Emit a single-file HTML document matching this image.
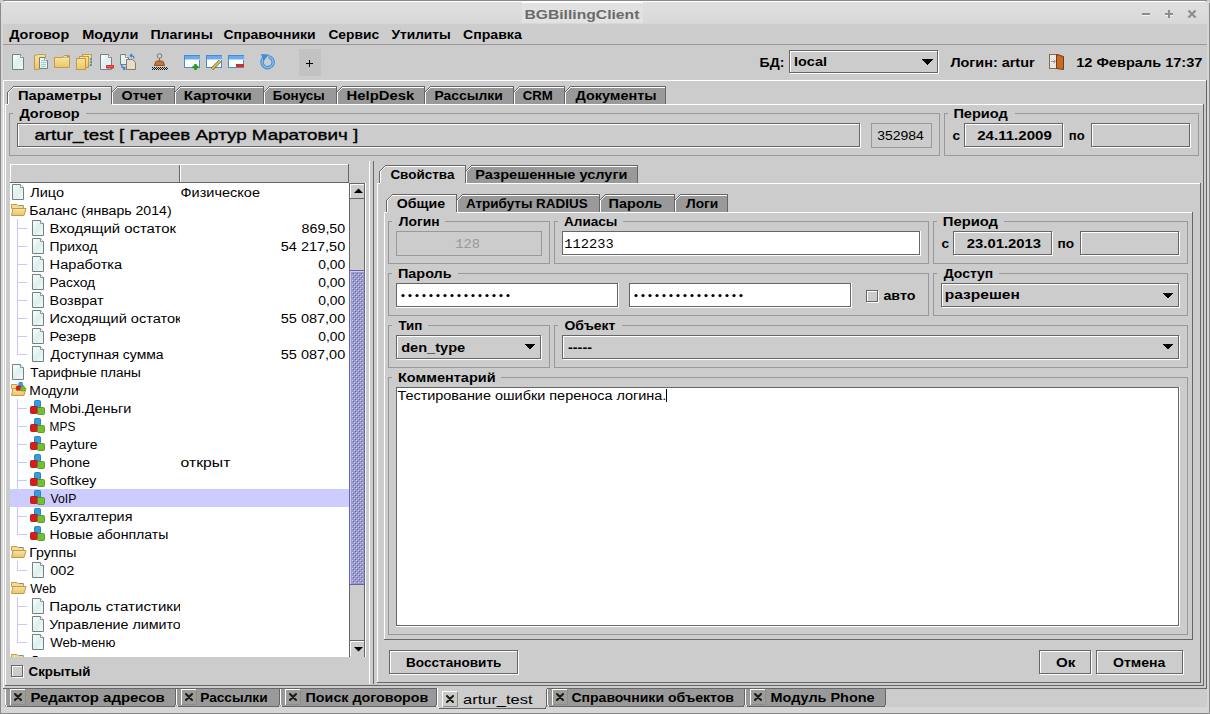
<!DOCTYPE html><html><head><meta charset="utf-8"><style>html,body{margin:0;padding:0;background:#cccccc;overflow:hidden}svg{display:block}</style></head><body>
<svg width="1210" height="714" viewBox="0 0 1210 714" shape-rendering="crispEdges">
<defs><linearGradient id="tg" x1="0" y1="0" x2="0" y2="1"><stop offset="0" stop-color="#e0e0e0"/><stop offset="1" stop-color="#d8d8d8"/></linearGradient><pattern id="bump" x="0" y="0" width="4" height="4" patternUnits="userSpaceOnUse"><rect x="0" y="0" width="1" height="1" fill="#ccccff"/><rect x="1" y="1" width="1" height="1" fill="#666699"/><rect x="2" y="2" width="1" height="1" fill="#ccccff"/><rect x="3" y="3" width="1" height="1" fill="#666699"/></pattern></defs>
<rect x="0" y="0" width="1210" height="714" fill="#cccccc" />
<path d="M0 714 V6 Q0 0 6 0 H1204 Q1210 0 1210 6 V714 Z" fill="#8a8a8a"/>
<rect x="1" y="1" width="1208" height="712" fill="#d6d6d6" />
<path d="M1 24 V6 Q1 1 6 1 H1203 Q1208 1 1208 6 V24 Z" fill="url(#tg)"/>
<rect x="5" y="1" width="1200" height="1" fill="#ffffff" />
<rect x="522" y="2" width="121" height="21" fill="#e2e2e2" />
<rect x="522" y="2" width="121" height="1" fill="#ffffff" />
<text x="524.4" y="19" font-family="Liberation Sans" font-size="13.5" font-weight="bold" fill="#6b6b6b" textLength="115.0" lengthAdjust="spacingAndGlyphs" >BGBillingClient</text>
<rect x="1142" y="13" width="8" height="2" fill="#8c8c8c" />
<rect x="1142" y="15" width="8" height="1" fill="#f4f4f4" />
<rect x="1165" y="13" width="8" height="2" fill="#8c8c8c" />
<rect x="1168" y="10" width="2" height="8" fill="#8c8c8c" />
<rect x="1170" y="15" width="3" height="1" fill="#f4f4f4" />
<rect x="1165" y="15" width="3" height="1" fill="#f4f4f4" />
<path d="M1188.5 10.5 L1195.5 17.5 M1195.5 10.5 L1188.5 17.5" stroke="#8c8c8c" stroke-width="2.2" shape-rendering="geometricPrecision"/>
<rect x="3" y="24" width="1204" height="683" fill="#cccccc" />
<rect x="3" y="24" width="1204" height="20" fill="#cdcdcd" />
<rect x="3" y="44" width="1204" height="1" fill="#999999" />
<text x="9.2" y="39" font-family="Liberation Sans" font-size="12" font-weight="bold" fill="#000" textLength="60.0" lengthAdjust="spacingAndGlyphs" >Договор</text>
<text x="82.2" y="39" font-family="Liberation Sans" font-size="12" font-weight="bold" fill="#000" textLength="56.2" lengthAdjust="spacingAndGlyphs" >Модули</text>
<text x="150.4" y="39" font-family="Liberation Sans" font-size="12" font-weight="bold" fill="#000" textLength="62.4" lengthAdjust="spacingAndGlyphs" >Плагины</text>
<text x="223.4" y="39" font-family="Liberation Sans" font-size="12" font-weight="bold" fill="#000" textLength="92.2" lengthAdjust="spacingAndGlyphs" >Справочники</text>
<text x="328.4" y="39" font-family="Liberation Sans" font-size="12" font-weight="bold" fill="#000" textLength="50.8" lengthAdjust="spacingAndGlyphs" >Сервис</text>
<text x="391.4" y="39" font-family="Liberation Sans" font-size="12" font-weight="bold" fill="#000" textLength="59.4" lengthAdjust="spacingAndGlyphs" >Утилиты</text>
<text x="463.0" y="39" font-family="Liberation Sans" font-size="12" font-weight="bold" fill="#000" textLength="58.8" lengthAdjust="spacingAndGlyphs" >Справка</text>
<defs><linearGradient id="pg" x1="0" y1="0" x2="1" y2="1"><stop offset="0" stop-color="#ffffff"/><stop offset="0.5" stop-color="#dfeeee"/><stop offset="1" stop-color="#f4fafa"/></linearGradient><linearGradient id="fg" x1="0" y1="0" x2="0" y2="1"><stop offset="0" stop-color="#f8e3a0"/><stop offset="1" stop-color="#e9c56a"/></linearGradient><linearGradient id="bg2" x1="0" y1="0" x2="0" y2="1"><stop offset="0" stop-color="#9fd0f8"/><stop offset="1" stop-color="#3d8ee0"/></linearGradient></defs>
<path d="M12.5 54.5 H20.5 L23.5 57.5 V69.5 H12.5 Z" fill="url(#pg)" stroke="#6f8383" stroke-width="1" shape-rendering="geometricPrecision"/>
<path d="M20.5 54.5 V57.5 H23.5" fill="#ffffff" stroke="#6f8383" stroke-width="0.8" shape-rendering="geometricPrecision"/>
<path d="M34.5 55.5 L38.5 54.5 H45.5 V66.5 L38.5 69.5 H34.5 Z" fill="url(#fg)" stroke="#c49a45" stroke-width="1" shape-rendering="geometricPrecision"/>
<path d="M39.5 57.5 H44.5 L47.5 60.5 V68.5 H39.5 Z" fill="url(#pg)" stroke="#6f8383" stroke-width="1" shape-rendering="geometricPrecision"/>
<path d="M44.5 57.5 V60.5 H47.5" fill="#ffffff" stroke="#6f8383" stroke-width="0.8" shape-rendering="geometricPrecision"/>
<rect x="41" y="60" width="5" height="1" fill="#b8c4c4" />
<rect x="41" y="62" width="5" height="1" fill="#b8c4c4" />
<rect x="41" y="64" width="5" height="1" fill="#b8c4c4" />
<rect x="41" y="66" width="5" height="1" fill="#b8c4c4" />
<path d="M54.5 57.5 H69.5 V67.5 H54.5 Z" fill="url(#fg)" stroke="#c49a45" stroke-width="1" shape-rendering="geometricPrecision"/>
<path d="M62.5 57.5 L64 55.5 H69.5 V57.5" fill="#f3dc98" stroke="#c49a45" stroke-width="1" shape-rendering="geometricPrecision"/>
<rect x="67" y="56" width="2" height="1" fill="#3aa0e8" />
<rect x="82.5" y="54.5" width="9" height="11" fill="url(#fg)" stroke="#c49a45" stroke-width="1" shape-rendering="geometricPrecision"/>
<rect x="79.5" y="56.5" width="9" height="11" fill="url(#fg)" stroke="#c49a45" stroke-width="1" shape-rendering="geometricPrecision"/>
<rect x="76.5" y="58.5" width="9" height="11" fill="url(#fg)" stroke="#c49a45" stroke-width="1" shape-rendering="geometricPrecision"/>
<rect x="90" y="58" width="2" height="2" fill="#3aa0e8" />
<rect x="90" y="61" width="2" height="2" fill="#3aa0e8" />
<rect x="90" y="64" width="2" height="2" fill="#3aa0e8" />
<path d="M100.5 54.5 H108.5 L111.5 57.5 V69.5 H100.5 Z" fill="url(#pg)" stroke="#6f8383" stroke-width="1" shape-rendering="geometricPrecision"/>
<path d="M108.5 54.5 V57.5 H111.5" fill="#ffffff" stroke="#6f8383" stroke-width="0.8" shape-rendering="geometricPrecision"/>
<rect x="106" y="65" width="8" height="3.5" rx="1" fill="#d62a2a" shape-rendering="geometricPrecision"/>
<rect x="107" y="66" width="6" height="1" fill="#ff6060" />
<path d="M120.5 54.5 H125.5 L128.5 57.5 V64.5 H120.5 Z" fill="url(#pg)" stroke="#6f8383" stroke-width="1" shape-rendering="geometricPrecision"/>
<path d="M125.5 54.5 V57.5 H128.5" fill="#ffffff" stroke="#6f8383" stroke-width="0.8" shape-rendering="geometricPrecision"/>
<path d="M126.5 59.5 H132.5 L135.5 62.5 V69.5 H126.5 Z" fill="#e8dcc8" stroke="#8a7a66" stroke-width="1" shape-rendering="geometricPrecision"/>
<path d="M131 55.5 q3 0 3 3 M130 55.5 l2 -1.5 M130 55.5 l2 1.5" stroke="#3a78e0" stroke-width="1.2" fill="none" shape-rendering="geometricPrecision"/>
<path d="M121.5 64.5 q0 4 4 4 M125.5 68.5 l-2 -1.5 M125.5 68.5 l-2 1.5" stroke="#3a78e0" stroke-width="1.2" fill="none" shape-rendering="geometricPrecision"/>
<circle cx="159.5" cy="56" r="2.3" fill="#d0d0d0" stroke="#707070" stroke-width="0.9" shape-rendering="geometricPrecision"/>
<rect x="159" y="58" width="1" height="3" fill="#707070" />
<path d="M154.5 65.5 L155.5 62 Q156 61 157.5 61 H161.5 Q163 61 163.5 62 L164.5 65.5 Z" fill="#c8763a" stroke="#8a4a1a" stroke-width="0.9" shape-rendering="geometricPrecision"/>
<rect x="152" y="67" width="1" height="1" fill="#1a1a1a" />
<rect x="153" y="68" width="1" height="1" fill="#1a1a1a" />
<rect x="152" y="69" width="1" height="1" fill="#1a1a1a" />
<rect x="154" y="67" width="1" height="1" fill="#1a1a1a" />
<rect x="155" y="68" width="1" height="1" fill="#1a1a1a" />
<rect x="154" y="69" width="1" height="1" fill="#1a1a1a" />
<rect x="156" y="67" width="1" height="1" fill="#1a1a1a" />
<rect x="157" y="68" width="1" height="1" fill="#1a1a1a" />
<rect x="156" y="69" width="1" height="1" fill="#1a1a1a" />
<rect x="158" y="67" width="1" height="1" fill="#1a1a1a" />
<rect x="159" y="68" width="1" height="1" fill="#1a1a1a" />
<rect x="158" y="69" width="1" height="1" fill="#1a1a1a" />
<rect x="160" y="67" width="1" height="1" fill="#1a1a1a" />
<rect x="161" y="68" width="1" height="1" fill="#1a1a1a" />
<rect x="160" y="69" width="1" height="1" fill="#1a1a1a" />
<rect x="162" y="67" width="1" height="1" fill="#1a1a1a" />
<rect x="163" y="68" width="1" height="1" fill="#1a1a1a" />
<rect x="162" y="69" width="1" height="1" fill="#1a1a1a" />
<rect x="164" y="67" width="1" height="1" fill="#1a1a1a" />
<rect x="165" y="68" width="1" height="1" fill="#1a1a1a" />
<rect x="164" y="69" width="1" height="1" fill="#1a1a1a" />
<rect x="166" y="67" width="1" height="1" fill="#1a1a1a" />
<rect x="167" y="68" width="1" height="1" fill="#1a1a1a" />
<rect x="166" y="69" width="1" height="1" fill="#1a1a1a" />
<rect x="184.5" y="55.5" width="15" height="12" fill="#ffffff" stroke="#4a8ad0" stroke-width="1" shape-rendering="geometricPrecision"/>
<rect x="185" y="56" width="15" height="3" fill="#6aaaf0" />
<rect x="185" y="59" width="15" height="1" fill="#b9d8f8" />
<rect x="206.5" y="55.5" width="15" height="12" fill="#ffffff" stroke="#4a8ad0" stroke-width="1" shape-rendering="geometricPrecision"/>
<rect x="207" y="56" width="15" height="3" fill="#6aaaf0" />
<rect x="207" y="59" width="15" height="1" fill="#b9d8f8" />
<rect x="228.5" y="55.5" width="15" height="12" fill="#ffffff" stroke="#4a8ad0" stroke-width="1" shape-rendering="geometricPrecision"/>
<rect x="229" y="56" width="15" height="3" fill="#6aaaf0" />
<rect x="229" y="59" width="15" height="1" fill="#b9d8f8" />
<path d="M195.5 64 V70 M192.5 67 H198.5" stroke="#1e9a1e" stroke-width="2.4" shape-rendering="geometricPrecision"/>
<path d="M212 69 L220 61" stroke="#3a3a3a" stroke-width="3" shape-rendering="geometricPrecision"/><path d="M212 69 L220 61" stroke="#f0c030" stroke-width="1.8" shape-rendering="geometricPrecision"/>
<rect x="236" y="64" width="8" height="3" fill="#d62a2a" />
<path d="M263.6 58.2 A5.6 5.6 0 1 0 268.5 56.6" fill="none" stroke="#3f8fd8" stroke-width="3.4" shape-rendering="geometricPrecision"/>
<path d="M263.6 58.2 A5.6 5.6 0 1 0 268.5 56.6" fill="none" stroke="#8cc6f4" stroke-width="1.2" shape-rendering="geometricPrecision"/>
<path d="M261 54 L269 54.5 L263.5 61 Z" fill="#3f8fd8" shape-rendering="geometricPrecision"/>
<rect x="299" y="49" width="22" height="27" fill="#c2c2c2" />
<rect x="306" y="63" width="7" height="1" fill="#000" />
<rect x="309" y="60" width="1" height="7" fill="#000" />
<text x="759.6" y="67" font-family="Liberation Sans" font-size="12" font-weight="bold" fill="#000" textLength="24.8" lengthAdjust="spacingAndGlyphs" >БД:</text>
<rect x="789" y="50" width="150" height="24" fill="#cccccc" />
<rect x="790" y="73" width="149" height="1" fill="#ffffff" />
<rect x="938" y="51" width="1" height="23" fill="#ffffff" />
<rect x="790" y="51" width="148" height="1" fill="#ffffff" />
<rect x="790" y="51" width="1" height="22" fill="#ffffff" />
<rect x="789" y="50" width="149" height="1" fill="#666666" />
<rect x="789" y="50" width="1" height="23" fill="#666666" />
<rect x="789" y="72" width="149" height="1" fill="#666666" />
<rect x="937" y="50" width="1" height="23" fill="#666666" />
<rect x="791" y="52" width="146" height="20" fill="#cccccc" />
<text x="794.0" y="66" font-family="Liberation Sans" font-size="12" font-weight="bold" fill="#000" textLength="33.0" lengthAdjust="spacingAndGlyphs" >local</text>
<path d="M922.0 59h11l-5.5 6z" fill="#000"/>
<text x="950.4" y="67" font-family="Liberation Sans" font-size="12" font-weight="bold" fill="#000" textLength="84.2" lengthAdjust="spacingAndGlyphs" >Логин: artur</text>
<rect x="1049.5" y="54.5" width="9" height="14" fill="#e8e8e8" stroke="#8a6a4a" stroke-width="1" shape-rendering="geometricPrecision"/>
<path d="M1056.5 54.5 L1063.5 56.5 V69.5 L1056.5 68.5 Z" fill="#c86a2a" stroke="#7a3a10" stroke-width="1" shape-rendering="geometricPrecision"/>
<path d="M1051 61.5 H1055 M1053.5 59.5 L1055.5 61.5 L1053.5 63.5" stroke="#9a9a9a" stroke-width="1" fill="none" shape-rendering="geometricPrecision"/>
<text x="1076.2" y="67" font-family="Liberation Sans" font-size="12" font-weight="bold" fill="#000" textLength="126.2" lengthAdjust="spacingAndGlyphs" >12 Февраль 17:37</text>
<rect x="3" y="80" width="1204" height="1" fill="#ffffff" />
<rect x="3" y="80" width="1" height="609" fill="#ffffff" />
<rect x="1206" y="80" width="1" height="609" fill="#666666" />
<rect x="3" y="688" width="434" height="1" fill="#666666" />
<rect x="547" y="688" width="660" height="1" fill="#666666" />
<path d="M8 104 V92 L14 86 H112 V104 Z" fill="#cccccc" shape-rendering="crispEdges"/>
<rect x="7" y="92" width="1" height="12" fill="#666666" />
<rect x="7" y="92" width="1" height="1" fill="#666666" />
<rect x="8" y="91" width="1" height="1" fill="#666666" />
<rect x="9" y="90" width="1" height="1" fill="#666666" />
<rect x="10" y="89" width="1" height="1" fill="#666666" />
<rect x="11" y="88" width="1" height="1" fill="#666666" />
<rect x="12" y="87" width="1" height="1" fill="#666666" />
<rect x="13" y="86" width="99" height="1" fill="#666666" />
<rect x="111" y="86" width="1" height="18" fill="#666666" />
<rect x="8" y="92" width="1" height="12" fill="#ffffff" />
<rect x="9" y="91" width="1" height="1" fill="#ffffff" />
<rect x="10" y="90" width="1" height="1" fill="#ffffff" />
<rect x="11" y="89" width="1" height="1" fill="#ffffff" />
<rect x="12" y="88" width="1" height="1" fill="#ffffff" />
<rect x="9" y="91" width="1" height="1" fill="#ffffff" />
<rect x="10" y="90" width="1" height="1" fill="#ffffff" />
<rect x="11" y="89" width="1" height="1" fill="#ffffff" />
<rect x="12" y="88" width="1" height="1" fill="#ffffff" />
<rect x="13" y="87" width="1" height="1" fill="#ffffff" />
<rect x="14" y="87" width="97" height="1" fill="#ffffff" />
<text x="18.0" y="100" font-family="Liberation Sans" font-size="12" font-weight="bold" fill="#000" textLength="83.6" lengthAdjust="spacingAndGlyphs" >Параметры</text>
<path d="M112 104 V92 L118 86 H175 V104 Z" fill="#999999" shape-rendering="crispEdges"/>
<rect x="111" y="92" width="1" height="1" fill="#666666" />
<rect x="112" y="91" width="1" height="1" fill="#666666" />
<rect x="113" y="90" width="1" height="1" fill="#666666" />
<rect x="114" y="89" width="1" height="1" fill="#666666" />
<rect x="115" y="88" width="1" height="1" fill="#666666" />
<rect x="116" y="87" width="1" height="1" fill="#666666" />
<rect x="117" y="86" width="58" height="1" fill="#666666" />
<rect x="174" y="86" width="1" height="18" fill="#666666" />
<rect x="112" y="92" width="1" height="12" fill="#ffffff" />
<rect x="113" y="91" width="1" height="1" fill="#ffffff" />
<rect x="114" y="90" width="1" height="1" fill="#ffffff" />
<rect x="115" y="89" width="1" height="1" fill="#ffffff" />
<rect x="116" y="88" width="1" height="1" fill="#ffffff" />
<rect x="113" y="91" width="1" height="1" fill="#ffffff" />
<rect x="114" y="90" width="1" height="1" fill="#ffffff" />
<rect x="115" y="89" width="1" height="1" fill="#ffffff" />
<rect x="116" y="88" width="1" height="1" fill="#ffffff" />
<rect x="117" y="87" width="1" height="1" fill="#ffffff" />
<rect x="118" y="87" width="56" height="1" fill="#ffffff" />
<text x="121.6" y="100" font-family="Liberation Sans" font-size="12" font-weight="bold" fill="#000" textLength="41.2" lengthAdjust="spacingAndGlyphs" >Отчет</text>
<path d="M175 104 V92 L181 86 H264 V104 Z" fill="#999999" shape-rendering="crispEdges"/>
<rect x="174" y="92" width="1" height="1" fill="#666666" />
<rect x="175" y="91" width="1" height="1" fill="#666666" />
<rect x="176" y="90" width="1" height="1" fill="#666666" />
<rect x="177" y="89" width="1" height="1" fill="#666666" />
<rect x="178" y="88" width="1" height="1" fill="#666666" />
<rect x="179" y="87" width="1" height="1" fill="#666666" />
<rect x="180" y="86" width="84" height="1" fill="#666666" />
<rect x="263" y="86" width="1" height="18" fill="#666666" />
<rect x="175" y="92" width="1" height="12" fill="#ffffff" />
<rect x="176" y="91" width="1" height="1" fill="#ffffff" />
<rect x="177" y="90" width="1" height="1" fill="#ffffff" />
<rect x="178" y="89" width="1" height="1" fill="#ffffff" />
<rect x="179" y="88" width="1" height="1" fill="#ffffff" />
<rect x="176" y="91" width="1" height="1" fill="#ffffff" />
<rect x="177" y="90" width="1" height="1" fill="#ffffff" />
<rect x="178" y="89" width="1" height="1" fill="#ffffff" />
<rect x="179" y="88" width="1" height="1" fill="#ffffff" />
<rect x="180" y="87" width="1" height="1" fill="#ffffff" />
<rect x="181" y="87" width="82" height="1" fill="#ffffff" />
<text x="183.8" y="100" font-family="Liberation Sans" font-size="12" font-weight="bold" fill="#000" textLength="68.0" lengthAdjust="spacingAndGlyphs" >Карточки</text>
<path d="M264 104 V92 L270 86 H337 V104 Z" fill="#999999" shape-rendering="crispEdges"/>
<rect x="263" y="92" width="1" height="1" fill="#666666" />
<rect x="264" y="91" width="1" height="1" fill="#666666" />
<rect x="265" y="90" width="1" height="1" fill="#666666" />
<rect x="266" y="89" width="1" height="1" fill="#666666" />
<rect x="267" y="88" width="1" height="1" fill="#666666" />
<rect x="268" y="87" width="1" height="1" fill="#666666" />
<rect x="269" y="86" width="68" height="1" fill="#666666" />
<rect x="336" y="86" width="1" height="18" fill="#666666" />
<rect x="264" y="92" width="1" height="12" fill="#ffffff" />
<rect x="265" y="91" width="1" height="1" fill="#ffffff" />
<rect x="266" y="90" width="1" height="1" fill="#ffffff" />
<rect x="267" y="89" width="1" height="1" fill="#ffffff" />
<rect x="268" y="88" width="1" height="1" fill="#ffffff" />
<rect x="265" y="91" width="1" height="1" fill="#ffffff" />
<rect x="266" y="90" width="1" height="1" fill="#ffffff" />
<rect x="267" y="89" width="1" height="1" fill="#ffffff" />
<rect x="268" y="88" width="1" height="1" fill="#ffffff" />
<rect x="269" y="87" width="1" height="1" fill="#ffffff" />
<rect x="270" y="87" width="66" height="1" fill="#ffffff" />
<text x="272.8" y="100" font-family="Liberation Sans" font-size="12" font-weight="bold" fill="#000" textLength="51.8" lengthAdjust="spacingAndGlyphs" >Бонусы</text>
<path d="M337 104 V92 L343 86 H425 V104 Z" fill="#999999" shape-rendering="crispEdges"/>
<rect x="336" y="92" width="1" height="1" fill="#666666" />
<rect x="337" y="91" width="1" height="1" fill="#666666" />
<rect x="338" y="90" width="1" height="1" fill="#666666" />
<rect x="339" y="89" width="1" height="1" fill="#666666" />
<rect x="340" y="88" width="1" height="1" fill="#666666" />
<rect x="341" y="87" width="1" height="1" fill="#666666" />
<rect x="342" y="86" width="83" height="1" fill="#666666" />
<rect x="424" y="86" width="1" height="18" fill="#666666" />
<rect x="337" y="92" width="1" height="12" fill="#ffffff" />
<rect x="338" y="91" width="1" height="1" fill="#ffffff" />
<rect x="339" y="90" width="1" height="1" fill="#ffffff" />
<rect x="340" y="89" width="1" height="1" fill="#ffffff" />
<rect x="341" y="88" width="1" height="1" fill="#ffffff" />
<rect x="338" y="91" width="1" height="1" fill="#ffffff" />
<rect x="339" y="90" width="1" height="1" fill="#ffffff" />
<rect x="340" y="89" width="1" height="1" fill="#ffffff" />
<rect x="341" y="88" width="1" height="1" fill="#ffffff" />
<rect x="342" y="87" width="1" height="1" fill="#ffffff" />
<rect x="343" y="87" width="81" height="1" fill="#ffffff" />
<text x="346.6" y="100" font-family="Liberation Sans" font-size="12" font-weight="bold" fill="#000" textLength="67.8" lengthAdjust="spacingAndGlyphs" >HelpDesk</text>
<path d="M425 104 V92 L431 86 H514 V104 Z" fill="#999999" shape-rendering="crispEdges"/>
<rect x="424" y="92" width="1" height="1" fill="#666666" />
<rect x="425" y="91" width="1" height="1" fill="#666666" />
<rect x="426" y="90" width="1" height="1" fill="#666666" />
<rect x="427" y="89" width="1" height="1" fill="#666666" />
<rect x="428" y="88" width="1" height="1" fill="#666666" />
<rect x="429" y="87" width="1" height="1" fill="#666666" />
<rect x="430" y="86" width="84" height="1" fill="#666666" />
<rect x="513" y="86" width="1" height="18" fill="#666666" />
<rect x="425" y="92" width="1" height="12" fill="#ffffff" />
<rect x="426" y="91" width="1" height="1" fill="#ffffff" />
<rect x="427" y="90" width="1" height="1" fill="#ffffff" />
<rect x="428" y="89" width="1" height="1" fill="#ffffff" />
<rect x="429" y="88" width="1" height="1" fill="#ffffff" />
<rect x="426" y="91" width="1" height="1" fill="#ffffff" />
<rect x="427" y="90" width="1" height="1" fill="#ffffff" />
<rect x="428" y="89" width="1" height="1" fill="#ffffff" />
<rect x="429" y="88" width="1" height="1" fill="#ffffff" />
<rect x="430" y="87" width="1" height="1" fill="#ffffff" />
<rect x="431" y="87" width="82" height="1" fill="#ffffff" />
<text x="434.4" y="100" font-family="Liberation Sans" font-size="12" font-weight="bold" fill="#000" textLength="68.4" lengthAdjust="spacingAndGlyphs" >Рассылки</text>
<path d="M514 104 V92 L520 86 H565 V104 Z" fill="#999999" shape-rendering="crispEdges"/>
<rect x="513" y="92" width="1" height="1" fill="#666666" />
<rect x="514" y="91" width="1" height="1" fill="#666666" />
<rect x="515" y="90" width="1" height="1" fill="#666666" />
<rect x="516" y="89" width="1" height="1" fill="#666666" />
<rect x="517" y="88" width="1" height="1" fill="#666666" />
<rect x="518" y="87" width="1" height="1" fill="#666666" />
<rect x="519" y="86" width="46" height="1" fill="#666666" />
<rect x="564" y="86" width="1" height="18" fill="#666666" />
<rect x="514" y="92" width="1" height="12" fill="#ffffff" />
<rect x="515" y="91" width="1" height="1" fill="#ffffff" />
<rect x="516" y="90" width="1" height="1" fill="#ffffff" />
<rect x="517" y="89" width="1" height="1" fill="#ffffff" />
<rect x="518" y="88" width="1" height="1" fill="#ffffff" />
<rect x="515" y="91" width="1" height="1" fill="#ffffff" />
<rect x="516" y="90" width="1" height="1" fill="#ffffff" />
<rect x="517" y="89" width="1" height="1" fill="#ffffff" />
<rect x="518" y="88" width="1" height="1" fill="#ffffff" />
<rect x="519" y="87" width="1" height="1" fill="#ffffff" />
<rect x="520" y="87" width="44" height="1" fill="#ffffff" />
<text x="522.8" y="100" font-family="Liberation Sans" font-size="12" font-weight="bold" fill="#000" textLength="30.0" lengthAdjust="spacingAndGlyphs" >CRM</text>
<path d="M565 104 V92 L571 86 H666 V104 Z" fill="#999999" shape-rendering="crispEdges"/>
<rect x="564" y="92" width="1" height="1" fill="#666666" />
<rect x="565" y="91" width="1" height="1" fill="#666666" />
<rect x="566" y="90" width="1" height="1" fill="#666666" />
<rect x="567" y="89" width="1" height="1" fill="#666666" />
<rect x="568" y="88" width="1" height="1" fill="#666666" />
<rect x="569" y="87" width="1" height="1" fill="#666666" />
<rect x="570" y="86" width="96" height="1" fill="#666666" />
<rect x="665" y="86" width="1" height="18" fill="#666666" />
<rect x="565" y="92" width="1" height="12" fill="#ffffff" />
<rect x="566" y="91" width="1" height="1" fill="#ffffff" />
<rect x="567" y="90" width="1" height="1" fill="#ffffff" />
<rect x="568" y="89" width="1" height="1" fill="#ffffff" />
<rect x="569" y="88" width="1" height="1" fill="#ffffff" />
<rect x="566" y="91" width="1" height="1" fill="#ffffff" />
<rect x="567" y="90" width="1" height="1" fill="#ffffff" />
<rect x="568" y="89" width="1" height="1" fill="#ffffff" />
<rect x="569" y="88" width="1" height="1" fill="#ffffff" />
<rect x="570" y="87" width="1" height="1" fill="#ffffff" />
<rect x="571" y="87" width="94" height="1" fill="#ffffff" />
<text x="575.6" y="100" font-family="Liberation Sans" font-size="12" font-weight="bold" fill="#000" textLength="81.0" lengthAdjust="spacingAndGlyphs" >Документы</text>
<rect x="5" y="104" width="3" height="1" fill="#ffffff" />
<rect x="112" y="104" width="1092" height="1" fill="#ffffff" />
<rect x="5" y="104" width="1" height="582" fill="#ffffff" />
<rect x="1203" y="104" width="1" height="582" fill="#666666" />
<rect x="5" y="685" width="1199" height="1" fill="#666666" />
<rect x="9" y="113" width="4" height="1" fill="#999999" />
<rect x="86" y="113" width="854" height="1" fill="#999999" />
<rect x="9" y="113" width="1" height="43" fill="#999999" />
<rect x="939" y="113" width="1" height="43" fill="#999999" />
<rect x="9" y="155" width="931" height="1" fill="#999999" />
<text x="19.4" y="118" font-family="Liberation Sans" font-size="12" font-weight="bold" fill="#000" textLength="60.2" lengthAdjust="spacingAndGlyphs" >Договор</text>
<rect x="17" y="123" width="844" height="25" fill="#cccccc" />
<rect x="18" y="147" width="843" height="1" fill="#ffffff" />
<rect x="860" y="124" width="1" height="24" fill="#ffffff" />
<rect x="18" y="124" width="842" height="1" fill="#ffffff" />
<rect x="18" y="124" width="1" height="23" fill="#ffffff" />
<rect x="17" y="123" width="843" height="1" fill="#666666" />
<rect x="17" y="123" width="1" height="24" fill="#666666" />
<rect x="17" y="146" width="843" height="1" fill="#666666" />
<rect x="859" y="123" width="1" height="24" fill="#666666" />
<rect x="19" y="125" width="840" height="21" fill="#cccccc" />
<text x="34.4" y="140" font-family="Liberation Sans" font-size="15" font-weight="normal" fill="#000" textLength="323.8" lengthAdjust="spacingAndGlyphs" stroke="#000" stroke-width="0.35">artur_test [ Гареев Артур Маратович ]</text>
<rect x="871" y="123" width="61" height="25" fill="#cccccc" />
<rect x="871" y="123" width="61" height="1" fill="#999999" />
<rect x="871" y="147" width="61" height="1" fill="#999999" />
<rect x="871" y="123" width="1" height="25" fill="#999999" />
<rect x="931" y="123" width="1" height="25" fill="#999999" />
<text x="877.2" y="140" font-family="Liberation Sans" font-size="12" font-weight="normal" fill="#000" textLength="46.6" lengthAdjust="spacingAndGlyphs" >352984</text>
<rect x="944" y="113" width="4" height="1" fill="#999999" />
<rect x="1015" y="113" width="184" height="1" fill="#999999" />
<rect x="944" y="113" width="1" height="43" fill="#999999" />
<rect x="1198" y="113" width="1" height="43" fill="#999999" />
<rect x="944" y="155" width="255" height="1" fill="#999999" />
<text x="953.4" y="118" font-family="Liberation Sans" font-size="12" font-weight="bold" fill="#000" textLength="54.4" lengthAdjust="spacingAndGlyphs" >Период</text>
<text x="952.6" y="140" font-family="Liberation Sans" font-size="12" font-weight="bold" fill="#000" textLength="7.6" lengthAdjust="spacingAndGlyphs" >с</text>
<rect x="964" y="123" width="100" height="25" fill="#cccccc" />
<rect x="965" y="147" width="99" height="1" fill="#ffffff" />
<rect x="1063" y="124" width="1" height="24" fill="#ffffff" />
<rect x="965" y="124" width="98" height="1" fill="#ffffff" />
<rect x="965" y="124" width="1" height="23" fill="#ffffff" />
<rect x="964" y="123" width="99" height="1" fill="#666666" />
<rect x="964" y="123" width="1" height="24" fill="#666666" />
<rect x="964" y="146" width="99" height="1" fill="#666666" />
<rect x="1062" y="123" width="1" height="24" fill="#666666" />
<rect x="966" y="125" width="96" height="21" fill="#cccccc" />
<text x="977.2" y="140" font-family="Liberation Sans" font-size="12" font-weight="bold" fill="#000" textLength="74.6" lengthAdjust="spacingAndGlyphs" >24.11.2009</text>
<text x="1068.8" y="140" font-family="Liberation Sans" font-size="12" font-weight="bold" fill="#000" textLength="15.8" lengthAdjust="spacingAndGlyphs" >по</text>
<rect x="1091" y="123" width="100" height="25" fill="#cccccc" />
<rect x="1092" y="147" width="99" height="1" fill="#ffffff" />
<rect x="1190" y="124" width="1" height="24" fill="#ffffff" />
<rect x="1092" y="124" width="98" height="1" fill="#ffffff" />
<rect x="1092" y="124" width="1" height="23" fill="#ffffff" />
<rect x="1091" y="123" width="99" height="1" fill="#666666" />
<rect x="1091" y="123" width="1" height="24" fill="#666666" />
<rect x="1091" y="146" width="99" height="1" fill="#666666" />
<rect x="1189" y="123" width="1" height="24" fill="#666666" />
<rect x="1093" y="125" width="96" height="21" fill="#cccccc" />
<rect x="369" y="161" width="1" height="523" fill="#ffffff" />
<rect x="373" y="161" width="1" height="523" fill="#666666" />
<rect x="10" y="164" width="339" height="19" fill="#cccccc" />
<rect x="10" y="164" width="339" height="1" fill="#ffffff" />
<rect x="10" y="164" width="1" height="18" fill="#ffffff" />
<rect x="10" y="182" width="339" height="1" fill="#666666" />
<rect x="179" y="165" width="1" height="17" fill="#666666" />
<rect x="180" y="165" width="1" height="17" fill="#ffffff" />
<rect x="348" y="164" width="1" height="19" fill="#666666" />
<rect x="10" y="183" width="339" height="474" fill="#ffffff" />
<clipPath id="treeclip"><rect x="10" y="183" width="339" height="474"/></clipPath>
<clipPath id="col1"><rect x="10" y="183" width="170" height="474"/></clipPath>
<g clip-path="url(#treeclip)">
<rect x="17" y="219" width="1" height="136" fill="#c8c8fc" />
<rect x="18" y="228" width="9" height="1" fill="#c8c8fc" />
<rect x="18" y="246" width="9" height="1" fill="#c8c8fc" />
<rect x="18" y="264" width="9" height="1" fill="#c8c8fc" />
<rect x="18" y="282" width="9" height="1" fill="#c8c8fc" />
<rect x="18" y="300" width="9" height="1" fill="#c8c8fc" />
<rect x="18" y="318" width="9" height="1" fill="#c8c8fc" />
<rect x="18" y="336" width="9" height="1" fill="#c8c8fc" />
<rect x="18" y="354" width="9" height="1" fill="#c8c8fc" />
<rect x="17" y="399" width="1" height="136" fill="#c8c8fc" />
<rect x="18" y="408" width="9" height="1" fill="#c8c8fc" />
<rect x="18" y="426" width="9" height="1" fill="#c8c8fc" />
<rect x="18" y="444" width="9" height="1" fill="#c8c8fc" />
<rect x="18" y="462" width="9" height="1" fill="#c8c8fc" />
<rect x="18" y="480" width="9" height="1" fill="#c8c8fc" />
<rect x="18" y="498" width="9" height="1" fill="#c8c8fc" />
<rect x="18" y="516" width="9" height="1" fill="#c8c8fc" />
<rect x="18" y="534" width="9" height="1" fill="#c8c8fc" />
<rect x="17" y="561" width="1" height="10" fill="#c8c8fc" />
<rect x="18" y="570" width="9" height="1" fill="#c8c8fc" />
<rect x="17" y="597" width="1" height="46" fill="#c8c8fc" />
<rect x="18" y="606" width="9" height="1" fill="#c8c8fc" />
<rect x="18" y="624" width="9" height="1" fill="#c8c8fc" />
<rect x="18" y="642" width="9" height="1" fill="#c8c8fc" />
<rect x="10" y="489" width="339" height="18" fill="#ccccff" />
<path d="M12.5 184.5 H20.5 L23.5 187.5 V199.5 H12.5 Z" fill="url(#pg)" stroke="#6f8383" stroke-width="1" shape-rendering="geometricPrecision"/>
<path d="M20.5 184.5 V187.5 H23.5" fill="#ffffff" stroke="#6f8383" stroke-width="0.8" shape-rendering="geometricPrecision"/>
<text x="30.2" y="197" font-family="Liberation Sans" font-size="12" font-weight="normal" fill="#000" textLength="33.8" lengthAdjust="spacingAndGlyphs" >Лицо</text>
<text x="180.6" y="197" font-family="Liberation Sans" font-size="12" font-weight="normal" fill="#000" textLength="79.4" lengthAdjust="spacingAndGlyphs" >Физическое</text>
<path d="M11.5 204.5 H17 L18 205.5 H23.5 V208.5 H11.5 Z" fill="#f3dc98" stroke="#c49a45" stroke-width="1" shape-rendering="geometricPrecision"/>
<rect x="20" y="205" width="3" height="1" fill="#3aa0e8" />
<path d="M11.5 215.5 L13 208.5 H26 L24 215.5 Z" fill="url(#fg)" stroke="#c49a45" stroke-width="1" shape-rendering="geometricPrecision"/>
<text x="29.2" y="215" font-family="Liberation Sans" font-size="12" font-weight="normal" fill="#000" textLength="142.4" lengthAdjust="spacingAndGlyphs" >Баланс (январь 2014)</text>
<path d="M32.5 220.5 H40.5 L43.5 223.5 V235.5 H32.5 Z" fill="url(#pg)" stroke="#6f8383" stroke-width="1" shape-rendering="geometricPrecision"/>
<path d="M40.5 220.5 V223.5 H43.5" fill="#ffffff" stroke="#6f8383" stroke-width="0.8" shape-rendering="geometricPrecision"/>
<text x="49.6" y="233" font-family="Liberation Sans" font-size="12" font-weight="normal" fill="#000" textLength="126.4" lengthAdjust="spacingAndGlyphs" >Входящий остаток</text>
<text x="301.6" y="233" font-family="Liberation Sans" font-size="12" font-weight="normal" fill="#000" textLength="43.6" lengthAdjust="spacingAndGlyphs" >869,50</text>
<path d="M32.5 238.5 H40.5 L43.5 241.5 V253.5 H32.5 Z" fill="url(#pg)" stroke="#6f8383" stroke-width="1" shape-rendering="geometricPrecision"/>
<path d="M40.5 238.5 V241.5 H43.5" fill="#ffffff" stroke="#6f8383" stroke-width="0.8" shape-rendering="geometricPrecision"/>
<text x="49.6" y="251" font-family="Liberation Sans" font-size="12" font-weight="normal" fill="#000" textLength="47.8" lengthAdjust="spacingAndGlyphs" >Приход</text>
<text x="280.8" y="251" font-family="Liberation Sans" font-size="12" font-weight="normal" fill="#000" textLength="64.4" lengthAdjust="spacingAndGlyphs" >54 217,50</text>
<path d="M32.5 256.5 H40.5 L43.5 259.5 V271.5 H32.5 Z" fill="url(#pg)" stroke="#6f8383" stroke-width="1" shape-rendering="geometricPrecision"/>
<path d="M40.5 256.5 V259.5 H43.5" fill="#ffffff" stroke="#6f8383" stroke-width="0.8" shape-rendering="geometricPrecision"/>
<text x="49.6" y="269" font-family="Liberation Sans" font-size="12" font-weight="normal" fill="#000" textLength="72.6" lengthAdjust="spacingAndGlyphs" >Наработка</text>
<text x="318.2" y="269" font-family="Liberation Sans" font-size="12" font-weight="normal" fill="#000" textLength="27.0" lengthAdjust="spacingAndGlyphs" >0,00</text>
<path d="M32.5 274.5 H40.5 L43.5 277.5 V289.5 H32.5 Z" fill="url(#pg)" stroke="#6f8383" stroke-width="1" shape-rendering="geometricPrecision"/>
<path d="M40.5 274.5 V277.5 H43.5" fill="#ffffff" stroke="#6f8383" stroke-width="0.8" shape-rendering="geometricPrecision"/>
<text x="49.6" y="287" font-family="Liberation Sans" font-size="12" font-weight="normal" fill="#000" textLength="45.6" lengthAdjust="spacingAndGlyphs" >Расход</text>
<text x="318.2" y="287" font-family="Liberation Sans" font-size="12" font-weight="normal" fill="#000" textLength="27.0" lengthAdjust="spacingAndGlyphs" >0,00</text>
<path d="M32.5 292.5 H40.5 L43.5 295.5 V307.5 H32.5 Z" fill="url(#pg)" stroke="#6f8383" stroke-width="1" shape-rendering="geometricPrecision"/>
<path d="M40.5 292.5 V295.5 H43.5" fill="#ffffff" stroke="#6f8383" stroke-width="0.8" shape-rendering="geometricPrecision"/>
<text x="49.6" y="305" font-family="Liberation Sans" font-size="12" font-weight="normal" fill="#000" textLength="54.0" lengthAdjust="spacingAndGlyphs" >Возврат</text>
<text x="318.2" y="305" font-family="Liberation Sans" font-size="12" font-weight="normal" fill="#000" textLength="27.0" lengthAdjust="spacingAndGlyphs" >0,00</text>
<path d="M32.5 310.5 H40.5 L43.5 313.5 V325.5 H32.5 Z" fill="url(#pg)" stroke="#6f8383" stroke-width="1" shape-rendering="geometricPrecision"/>
<path d="M40.5 310.5 V313.5 H43.5" fill="#ffffff" stroke="#6f8383" stroke-width="0.8" shape-rendering="geometricPrecision"/>
<g clip-path="url(#col1)">
<text x="49.6" y="323" font-family="Liberation Sans" font-size="12" font-weight="normal" fill="#000" textLength="131.8" lengthAdjust="spacingAndGlyphs" >Исходящий остаток</text>
</g>
<text x="280.8" y="323" font-family="Liberation Sans" font-size="12" font-weight="normal" fill="#000" textLength="64.4" lengthAdjust="spacingAndGlyphs" >55 087,00</text>
<path d="M32.5 328.5 H40.5 L43.5 331.5 V343.5 H32.5 Z" fill="url(#pg)" stroke="#6f8383" stroke-width="1" shape-rendering="geometricPrecision"/>
<path d="M40.5 328.5 V331.5 H43.5" fill="#ffffff" stroke="#6f8383" stroke-width="0.8" shape-rendering="geometricPrecision"/>
<text x="49.6" y="341" font-family="Liberation Sans" font-size="12" font-weight="normal" fill="#000" textLength="46.6" lengthAdjust="spacingAndGlyphs" >Резерв</text>
<text x="318.2" y="341" font-family="Liberation Sans" font-size="12" font-weight="normal" fill="#000" textLength="27.0" lengthAdjust="spacingAndGlyphs" >0,00</text>
<path d="M32.5 346.5 H40.5 L43.5 349.5 V361.5 H32.5 Z" fill="url(#pg)" stroke="#6f8383" stroke-width="1" shape-rendering="geometricPrecision"/>
<path d="M40.5 346.5 V349.5 H43.5" fill="#ffffff" stroke="#6f8383" stroke-width="0.8" shape-rendering="geometricPrecision"/>
<text x="50.6" y="359" font-family="Liberation Sans" font-size="12" font-weight="normal" fill="#000" textLength="113.0" lengthAdjust="spacingAndGlyphs" >Доступная сумма</text>
<text x="280.8" y="359" font-family="Liberation Sans" font-size="12" font-weight="normal" fill="#000" textLength="64.4" lengthAdjust="spacingAndGlyphs" >55 087,00</text>
<path d="M12.5 364.5 H20.5 L23.5 367.5 V379.5 H12.5 Z" fill="url(#pg)" stroke="#6f8383" stroke-width="1" shape-rendering="geometricPrecision"/>
<path d="M20.5 364.5 V367.5 H23.5" fill="#ffffff" stroke="#6f8383" stroke-width="0.8" shape-rendering="geometricPrecision"/>
<text x="30.2" y="377" font-family="Liberation Sans" font-size="12" font-weight="normal" fill="#000" textLength="110.6" lengthAdjust="spacingAndGlyphs" >Тарифные планы</text>
<path d="M11.5 384.5 H17 L18 385.5 H23.5 V388.5 H11.5 Z" fill="#f3dc98" stroke="#c49a45" stroke-width="1" shape-rendering="geometricPrecision"/>
<rect x="20" y="385" width="3" height="1" fill="#3aa0e8" />
<path d="M11.5 395.5 L13 388.5 H26 L24 395.5 Z" fill="url(#fg)" stroke="#c49a45" stroke-width="1" shape-rendering="geometricPrecision"/>
<g transform="translate(16,382) scale(0.62)">
<rect x="4.5" y="0.5" width="6" height="7" rx="1" fill="#2f9fe0" stroke="#1a6fb0" stroke-width="0.8" shape-rendering="geometricPrecision"/>
<rect x="0.5" y="6.5" width="7" height="7" rx="1" fill="#e01818" stroke="#a01010" stroke-width="0.8" shape-rendering="geometricPrecision"/>
<rect x="7.5" y="7.5" width="7" height="7" rx="1" fill="#72c030" stroke="#4a8a20" stroke-width="0.8" shape-rendering="geometricPrecision"/>
</g>
<text x="29.2" y="395" font-family="Liberation Sans" font-size="12" font-weight="normal" fill="#000" textLength="49.6" lengthAdjust="spacingAndGlyphs" >Модули</text>
<rect x="34.5" y="400.5" width="6" height="7" rx="1" fill="#2f9fe0" stroke="#1a6fb0" stroke-width="0.8" shape-rendering="geometricPrecision"/>
<rect x="30.5" y="406.5" width="7" height="7" rx="1" fill="#e01818" stroke="#a01010" stroke-width="0.8" shape-rendering="geometricPrecision"/>
<rect x="37.5" y="407.5" width="7" height="7" rx="1" fill="#72c030" stroke="#4a8a20" stroke-width="0.8" shape-rendering="geometricPrecision"/>
<text x="49.6" y="413" font-family="Liberation Sans" font-size="12" font-weight="normal" fill="#000" textLength="81.8" lengthAdjust="spacingAndGlyphs" >Mobi.Деньги</text>
<rect x="34.5" y="418.5" width="6" height="7" rx="1" fill="#2f9fe0" stroke="#1a6fb0" stroke-width="0.8" shape-rendering="geometricPrecision"/>
<rect x="30.5" y="424.5" width="7" height="7" rx="1" fill="#e01818" stroke="#a01010" stroke-width="0.8" shape-rendering="geometricPrecision"/>
<rect x="37.5" y="425.5" width="7" height="7" rx="1" fill="#72c030" stroke="#4a8a20" stroke-width="0.8" shape-rendering="geometricPrecision"/>
<text x="49.6" y="431" font-family="Liberation Sans" font-size="12" font-weight="normal" fill="#000" textLength="25.8" lengthAdjust="spacingAndGlyphs" >MPS</text>
<rect x="34.5" y="436.5" width="6" height="7" rx="1" fill="#2f9fe0" stroke="#1a6fb0" stroke-width="0.8" shape-rendering="geometricPrecision"/>
<rect x="30.5" y="442.5" width="7" height="7" rx="1" fill="#e01818" stroke="#a01010" stroke-width="0.8" shape-rendering="geometricPrecision"/>
<rect x="37.5" y="443.5" width="7" height="7" rx="1" fill="#72c030" stroke="#4a8a20" stroke-width="0.8" shape-rendering="geometricPrecision"/>
<text x="49.6" y="449" font-family="Liberation Sans" font-size="12" font-weight="normal" fill="#000" textLength="47.8" lengthAdjust="spacingAndGlyphs" >Payture</text>
<rect x="34.5" y="454.5" width="6" height="7" rx="1" fill="#2f9fe0" stroke="#1a6fb0" stroke-width="0.8" shape-rendering="geometricPrecision"/>
<rect x="30.5" y="460.5" width="7" height="7" rx="1" fill="#e01818" stroke="#a01010" stroke-width="0.8" shape-rendering="geometricPrecision"/>
<rect x="37.5" y="461.5" width="7" height="7" rx="1" fill="#72c030" stroke="#4a8a20" stroke-width="0.8" shape-rendering="geometricPrecision"/>
<text x="49.6" y="467" font-family="Liberation Sans" font-size="12" font-weight="normal" fill="#000" textLength="40.4" lengthAdjust="spacingAndGlyphs" >Phone</text>
<text x="180.6" y="467" font-family="Liberation Sans" font-size="12" font-weight="normal" fill="#000" textLength="49.8" lengthAdjust="spacingAndGlyphs" >открыт</text>
<rect x="34.5" y="472.5" width="6" height="7" rx="1" fill="#2f9fe0" stroke="#1a6fb0" stroke-width="0.8" shape-rendering="geometricPrecision"/>
<rect x="30.5" y="478.5" width="7" height="7" rx="1" fill="#e01818" stroke="#a01010" stroke-width="0.8" shape-rendering="geometricPrecision"/>
<rect x="37.5" y="479.5" width="7" height="7" rx="1" fill="#72c030" stroke="#4a8a20" stroke-width="0.8" shape-rendering="geometricPrecision"/>
<text x="49.6" y="485" font-family="Liberation Sans" font-size="12" font-weight="normal" fill="#000" textLength="46.6" lengthAdjust="spacingAndGlyphs" >Softkey</text>
<rect x="34.5" y="490.5" width="6" height="7" rx="1" fill="#2f9fe0" stroke="#1a6fb0" stroke-width="0.8" shape-rendering="geometricPrecision"/>
<rect x="30.5" y="496.5" width="7" height="7" rx="1" fill="#e01818" stroke="#a01010" stroke-width="0.8" shape-rendering="geometricPrecision"/>
<rect x="37.5" y="497.5" width="7" height="7" rx="1" fill="#72c030" stroke="#4a8a20" stroke-width="0.8" shape-rendering="geometricPrecision"/>
<text x="50.6" y="503" font-family="Liberation Sans" font-size="12" font-weight="normal" fill="#000" textLength="25.8" lengthAdjust="spacingAndGlyphs" >VoIP</text>
<rect x="34.5" y="508.5" width="6" height="7" rx="1" fill="#2f9fe0" stroke="#1a6fb0" stroke-width="0.8" shape-rendering="geometricPrecision"/>
<rect x="30.5" y="514.5" width="7" height="7" rx="1" fill="#e01818" stroke="#a01010" stroke-width="0.8" shape-rendering="geometricPrecision"/>
<rect x="37.5" y="515.5" width="7" height="7" rx="1" fill="#72c030" stroke="#4a8a20" stroke-width="0.8" shape-rendering="geometricPrecision"/>
<text x="49.6" y="521" font-family="Liberation Sans" font-size="12" font-weight="normal" fill="#000" textLength="82.8" lengthAdjust="spacingAndGlyphs" >Бухгалтерия</text>
<rect x="34.5" y="526.5" width="6" height="7" rx="1" fill="#2f9fe0" stroke="#1a6fb0" stroke-width="0.8" shape-rendering="geometricPrecision"/>
<rect x="30.5" y="532.5" width="7" height="7" rx="1" fill="#e01818" stroke="#a01010" stroke-width="0.8" shape-rendering="geometricPrecision"/>
<rect x="37.5" y="533.5" width="7" height="7" rx="1" fill="#72c030" stroke="#4a8a20" stroke-width="0.8" shape-rendering="geometricPrecision"/>
<text x="49.6" y="539" font-family="Liberation Sans" font-size="12" font-weight="normal" fill="#000" textLength="118.8" lengthAdjust="spacingAndGlyphs" >Новые абонплаты</text>
<path d="M11.5 546.5 H17 L18 547.5 H23.5 V550.5 H11.5 Z" fill="#f3dc98" stroke="#c49a45" stroke-width="1" shape-rendering="geometricPrecision"/>
<rect x="20" y="547" width="3" height="1" fill="#3aa0e8" />
<path d="M11.5 557.5 L13 550.5 H26 L24 557.5 Z" fill="url(#fg)" stroke="#c49a45" stroke-width="1" shape-rendering="geometricPrecision"/>
<text x="29.2" y="557" font-family="Liberation Sans" font-size="12" font-weight="normal" fill="#000" textLength="47.2" lengthAdjust="spacingAndGlyphs" >Группы</text>
<path d="M32.5 562.5 H40.5 L43.5 565.5 V577.5 H32.5 Z" fill="url(#pg)" stroke="#6f8383" stroke-width="1" shape-rendering="geometricPrecision"/>
<path d="M40.5 562.5 V565.5 H43.5" fill="#ffffff" stroke="#6f8383" stroke-width="0.8" shape-rendering="geometricPrecision"/>
<text x="50.2" y="575" font-family="Liberation Sans" font-size="12" font-weight="normal" fill="#000" textLength="24.2" lengthAdjust="spacingAndGlyphs" >002</text>
<path d="M11.5 582.5 H17 L18 583.5 H23.5 V586.5 H11.5 Z" fill="#f3dc98" stroke="#c49a45" stroke-width="1" shape-rendering="geometricPrecision"/>
<rect x="20" y="583" width="3" height="1" fill="#3aa0e8" />
<path d="M11.5 593.5 L13 586.5 H26 L24 593.5 Z" fill="url(#fg)" stroke="#c49a45" stroke-width="1" shape-rendering="geometricPrecision"/>
<text x="30.2" y="593" font-family="Liberation Sans" font-size="12" font-weight="normal" fill="#000" textLength="26.0" lengthAdjust="spacingAndGlyphs" >Web</text>
<path d="M32.5 598.5 H40.5 L43.5 601.5 V613.5 H32.5 Z" fill="url(#pg)" stroke="#6f8383" stroke-width="1" shape-rendering="geometricPrecision"/>
<path d="M40.5 598.5 V601.5 H43.5" fill="#ffffff" stroke="#6f8383" stroke-width="0.8" shape-rendering="geometricPrecision"/>
<g clip-path="url(#col1)">
<text x="49.2" y="611" font-family="Liberation Sans" font-size="12" font-weight="normal" fill="#000" textLength="132.2" lengthAdjust="spacingAndGlyphs" >Пароль статистики</text>
</g>
<path d="M32.5 616.5 H40.5 L43.5 619.5 V631.5 H32.5 Z" fill="url(#pg)" stroke="#6f8383" stroke-width="1" shape-rendering="geometricPrecision"/>
<path d="M40.5 616.5 V619.5 H43.5" fill="#ffffff" stroke="#6f8383" stroke-width="0.8" shape-rendering="geometricPrecision"/>
<g clip-path="url(#col1)">
<text x="49.2" y="629" font-family="Liberation Sans" font-size="12" font-weight="normal" fill="#000" textLength="139.2" lengthAdjust="spacingAndGlyphs" >Управление лимитов</text>
</g>
<path d="M32.5 634.5 H40.5 L43.5 637.5 V649.5 H32.5 Z" fill="url(#pg)" stroke="#6f8383" stroke-width="1" shape-rendering="geometricPrecision"/>
<path d="M40.5 634.5 V637.5 H43.5" fill="#ffffff" stroke="#6f8383" stroke-width="0.8" shape-rendering="geometricPrecision"/>
<text x="50.2" y="647" font-family="Liberation Sans" font-size="12" font-weight="normal" fill="#000" textLength="65.2" lengthAdjust="spacingAndGlyphs" >Web-меню</text>
<path d="M11.5 654.5 H17 L18 655.5 H23.5 V658.5 H11.5 Z" fill="#f3dc98" stroke="#c49a45" stroke-width="1" shape-rendering="geometricPrecision"/>
<rect x="20" y="655" width="3" height="1" fill="#3aa0e8" />
<path d="M11.5 665.5 L13 658.5 H26 L24 665.5 Z" fill="url(#fg)" stroke="#c49a45" stroke-width="1" shape-rendering="geometricPrecision"/>
<text x="30.2" y="665" font-family="Liberation Sans" font-size="12" font-weight="normal" fill="#000" textLength="90.2" lengthAdjust="spacingAndGlyphs" >Дополнительно</text>
</g>
<rect x="349" y="183" width="16" height="474" fill="#cccccc" />
<rect x="349" y="183" width="1" height="474" fill="#666666" />
<rect x="364" y="183" width="1" height="474" fill="#666666" />
<rect x="350" y="183" width="14" height="16" fill="#cccccc" />
<rect x="349" y="183" width="16" height="1" fill="#666666" />
<rect x="350" y="184" width="14" height="1" fill="#ffffff" />
<rect x="350" y="184" width="1" height="15" fill="#ffffff" />
<rect x="350" y="198" width="14" height="1" fill="#666666" />
<path d="M354 193 H363 L358.5 188.5 Z" fill="#000" shape-rendering="geometricPrecision"/>
<rect x="350" y="640" width="14" height="16" fill="#cccccc" />
<rect x="349" y="640" width="16" height="1" fill="#666666" />
<rect x="350" y="641" width="14" height="1" fill="#ffffff" />
<rect x="350" y="641" width="1" height="15" fill="#ffffff" />
<path d="M354 647 H363 L358.5 651.5 Z" fill="#000" shape-rendering="geometricPrecision"/>
<rect x="365" y="183" width="1" height="474" fill="#ffffff" />
<rect x="349" y="270" width="16" height="315" fill="#666699" />
<rect x="350" y="271" width="14" height="313" fill="#ccccff" />
<rect x="351" y="272" width="13" height="312" fill="#9999cc" />
<rect x="352" y="273" width="11" height="310" fill="url(#bump)" />
<rect x="10" y="657" width="355" height="0" fill="#cccccc" />
<rect x="11" y="665" width="13" height="13" fill="#cccccc" />
<rect x="11" y="665" width="12" height="1" fill="#666666" />
<rect x="11" y="665" width="1" height="12" fill="#666666" />
<rect x="11" y="676" width="12" height="1" fill="#666666" />
<rect x="22" y="665" width="1" height="12" fill="#666666" />
<rect x="12" y="677" width="12" height="1" fill="#ffffff" />
<rect x="23" y="666" width="1" height="12" fill="#ffffff" />
<rect x="12" y="666" width="10" height="1" fill="#ffffff" />
<rect x="12" y="666" width="1" height="10" fill="#ffffff" />
<text x="28.6" y="676" font-family="Liberation Sans" font-size="12" font-weight="bold" fill="#000" textLength="61.8" lengthAdjust="spacingAndGlyphs" >Скрытый</text>
<path d="M380 183 V171 L386 165 H466 V183 Z" fill="#cccccc" shape-rendering="crispEdges"/>
<rect x="379" y="171" width="1" height="12" fill="#666666" />
<rect x="379" y="171" width="1" height="1" fill="#666666" />
<rect x="380" y="170" width="1" height="1" fill="#666666" />
<rect x="381" y="169" width="1" height="1" fill="#666666" />
<rect x="382" y="168" width="1" height="1" fill="#666666" />
<rect x="383" y="167" width="1" height="1" fill="#666666" />
<rect x="384" y="166" width="1" height="1" fill="#666666" />
<rect x="385" y="165" width="81" height="1" fill="#666666" />
<rect x="465" y="165" width="1" height="18" fill="#666666" />
<rect x="380" y="171" width="1" height="12" fill="#ffffff" />
<rect x="381" y="170" width="1" height="1" fill="#ffffff" />
<rect x="382" y="169" width="1" height="1" fill="#ffffff" />
<rect x="383" y="168" width="1" height="1" fill="#ffffff" />
<rect x="384" y="167" width="1" height="1" fill="#ffffff" />
<rect x="381" y="170" width="1" height="1" fill="#ffffff" />
<rect x="382" y="169" width="1" height="1" fill="#ffffff" />
<rect x="383" y="168" width="1" height="1" fill="#ffffff" />
<rect x="384" y="167" width="1" height="1" fill="#ffffff" />
<rect x="385" y="166" width="1" height="1" fill="#ffffff" />
<rect x="386" y="166" width="79" height="1" fill="#ffffff" />
<text x="390.4" y="179" font-family="Liberation Sans" font-size="12" font-weight="bold" fill="#000" textLength="64.0" lengthAdjust="spacingAndGlyphs" >Свойства</text>
<path d="M466 183 V171 L472 165 H638 V183 Z" fill="#999999" shape-rendering="crispEdges"/>
<rect x="465" y="171" width="1" height="1" fill="#666666" />
<rect x="466" y="170" width="1" height="1" fill="#666666" />
<rect x="467" y="169" width="1" height="1" fill="#666666" />
<rect x="468" y="168" width="1" height="1" fill="#666666" />
<rect x="469" y="167" width="1" height="1" fill="#666666" />
<rect x="470" y="166" width="1" height="1" fill="#666666" />
<rect x="471" y="165" width="167" height="1" fill="#666666" />
<rect x="637" y="165" width="1" height="18" fill="#666666" />
<rect x="466" y="171" width="1" height="12" fill="#ffffff" />
<rect x="467" y="170" width="1" height="1" fill="#ffffff" />
<rect x="468" y="169" width="1" height="1" fill="#ffffff" />
<rect x="469" y="168" width="1" height="1" fill="#ffffff" />
<rect x="470" y="167" width="1" height="1" fill="#ffffff" />
<rect x="467" y="170" width="1" height="1" fill="#ffffff" />
<rect x="468" y="169" width="1" height="1" fill="#ffffff" />
<rect x="469" y="168" width="1" height="1" fill="#ffffff" />
<rect x="470" y="167" width="1" height="1" fill="#ffffff" />
<rect x="471" y="166" width="1" height="1" fill="#ffffff" />
<rect x="472" y="166" width="165" height="1" fill="#ffffff" />
<text x="475.2" y="179" font-family="Liberation Sans" font-size="12" font-weight="bold" fill="#000" textLength="152.2" lengthAdjust="spacingAndGlyphs" >Разрешенные услуги</text>
<rect x="377" y="183" width="3" height="1" fill="#ffffff" />
<rect x="466" y="183" width="735" height="1" fill="#ffffff" />
<rect x="377" y="183" width="1" height="500" fill="#ffffff" />
<rect x="1200" y="183" width="1" height="500" fill="#666666" />
<rect x="377" y="682" width="824" height="1" fill="#666666" />
<path d="M387 212 V200 L393 194 H457 V212 Z" fill="#cccccc" shape-rendering="crispEdges"/>
<rect x="386" y="200" width="1" height="12" fill="#666666" />
<rect x="386" y="200" width="1" height="1" fill="#666666" />
<rect x="387" y="199" width="1" height="1" fill="#666666" />
<rect x="388" y="198" width="1" height="1" fill="#666666" />
<rect x="389" y="197" width="1" height="1" fill="#666666" />
<rect x="390" y="196" width="1" height="1" fill="#666666" />
<rect x="391" y="195" width="1" height="1" fill="#666666" />
<rect x="392" y="194" width="65" height="1" fill="#666666" />
<rect x="456" y="194" width="1" height="18" fill="#666666" />
<rect x="387" y="200" width="1" height="12" fill="#ffffff" />
<rect x="388" y="199" width="1" height="1" fill="#ffffff" />
<rect x="389" y="198" width="1" height="1" fill="#ffffff" />
<rect x="390" y="197" width="1" height="1" fill="#ffffff" />
<rect x="391" y="196" width="1" height="1" fill="#ffffff" />
<rect x="388" y="199" width="1" height="1" fill="#ffffff" />
<rect x="389" y="198" width="1" height="1" fill="#ffffff" />
<rect x="390" y="197" width="1" height="1" fill="#ffffff" />
<rect x="391" y="196" width="1" height="1" fill="#ffffff" />
<rect x="392" y="195" width="1" height="1" fill="#ffffff" />
<rect x="393" y="195" width="63" height="1" fill="#ffffff" />
<text x="396.8" y="208" font-family="Liberation Sans" font-size="12" font-weight="bold" fill="#000" textLength="48.4" lengthAdjust="spacingAndGlyphs" >Общие</text>
<path d="M457 212 V200 L463 194 H600 V212 Z" fill="#999999" shape-rendering="crispEdges"/>
<rect x="456" y="200" width="1" height="1" fill="#666666" />
<rect x="457" y="199" width="1" height="1" fill="#666666" />
<rect x="458" y="198" width="1" height="1" fill="#666666" />
<rect x="459" y="197" width="1" height="1" fill="#666666" />
<rect x="460" y="196" width="1" height="1" fill="#666666" />
<rect x="461" y="195" width="1" height="1" fill="#666666" />
<rect x="462" y="194" width="138" height="1" fill="#666666" />
<rect x="599" y="194" width="1" height="18" fill="#666666" />
<rect x="457" y="200" width="1" height="12" fill="#ffffff" />
<rect x="458" y="199" width="1" height="1" fill="#ffffff" />
<rect x="459" y="198" width="1" height="1" fill="#ffffff" />
<rect x="460" y="197" width="1" height="1" fill="#ffffff" />
<rect x="461" y="196" width="1" height="1" fill="#ffffff" />
<rect x="458" y="199" width="1" height="1" fill="#ffffff" />
<rect x="459" y="198" width="1" height="1" fill="#ffffff" />
<rect x="460" y="197" width="1" height="1" fill="#ffffff" />
<rect x="461" y="196" width="1" height="1" fill="#ffffff" />
<rect x="462" y="195" width="1" height="1" fill="#ffffff" />
<rect x="463" y="195" width="136" height="1" fill="#ffffff" />
<text x="466.0" y="208" font-family="Liberation Sans" font-size="12" font-weight="bold" fill="#000" textLength="121.6" lengthAdjust="spacingAndGlyphs" >Атрибуты RADIUS</text>
<path d="M600 212 V200 L606 194 H675 V212 Z" fill="#999999" shape-rendering="crispEdges"/>
<rect x="599" y="200" width="1" height="1" fill="#666666" />
<rect x="600" y="199" width="1" height="1" fill="#666666" />
<rect x="601" y="198" width="1" height="1" fill="#666666" />
<rect x="602" y="197" width="1" height="1" fill="#666666" />
<rect x="603" y="196" width="1" height="1" fill="#666666" />
<rect x="604" y="195" width="1" height="1" fill="#666666" />
<rect x="605" y="194" width="70" height="1" fill="#666666" />
<rect x="674" y="194" width="1" height="18" fill="#666666" />
<rect x="600" y="200" width="1" height="12" fill="#ffffff" />
<rect x="601" y="199" width="1" height="1" fill="#ffffff" />
<rect x="602" y="198" width="1" height="1" fill="#ffffff" />
<rect x="603" y="197" width="1" height="1" fill="#ffffff" />
<rect x="604" y="196" width="1" height="1" fill="#ffffff" />
<rect x="601" y="199" width="1" height="1" fill="#ffffff" />
<rect x="602" y="198" width="1" height="1" fill="#ffffff" />
<rect x="603" y="197" width="1" height="1" fill="#ffffff" />
<rect x="604" y="196" width="1" height="1" fill="#ffffff" />
<rect x="605" y="195" width="1" height="1" fill="#ffffff" />
<rect x="606" y="195" width="68" height="1" fill="#ffffff" />
<text x="608.6" y="208" font-family="Liberation Sans" font-size="12" font-weight="bold" fill="#000" textLength="53.6" lengthAdjust="spacingAndGlyphs" >Пароль</text>
<path d="M675 212 V200 L681 194 H728 V212 Z" fill="#999999" shape-rendering="crispEdges"/>
<rect x="674" y="200" width="1" height="1" fill="#666666" />
<rect x="675" y="199" width="1" height="1" fill="#666666" />
<rect x="676" y="198" width="1" height="1" fill="#666666" />
<rect x="677" y="197" width="1" height="1" fill="#666666" />
<rect x="678" y="196" width="1" height="1" fill="#666666" />
<rect x="679" y="195" width="1" height="1" fill="#666666" />
<rect x="680" y="194" width="48" height="1" fill="#666666" />
<rect x="727" y="194" width="1" height="18" fill="#666666" />
<rect x="675" y="200" width="1" height="12" fill="#ffffff" />
<rect x="676" y="199" width="1" height="1" fill="#ffffff" />
<rect x="677" y="198" width="1" height="1" fill="#ffffff" />
<rect x="678" y="197" width="1" height="1" fill="#ffffff" />
<rect x="679" y="196" width="1" height="1" fill="#ffffff" />
<rect x="676" y="199" width="1" height="1" fill="#ffffff" />
<rect x="677" y="198" width="1" height="1" fill="#ffffff" />
<rect x="678" y="197" width="1" height="1" fill="#ffffff" />
<rect x="679" y="196" width="1" height="1" fill="#ffffff" />
<rect x="680" y="195" width="1" height="1" fill="#ffffff" />
<rect x="681" y="195" width="46" height="1" fill="#ffffff" />
<text x="686.0" y="208" font-family="Liberation Sans" font-size="12" font-weight="bold" fill="#000" textLength="32.2" lengthAdjust="spacingAndGlyphs" >Логи</text>
<rect x="384" y="212" width="3" height="1" fill="#ffffff" />
<rect x="457" y="212" width="736" height="1" fill="#ffffff" />
<rect x="384" y="212" width="1" height="428" fill="#ffffff" />
<rect x="1192" y="212" width="1" height="428" fill="#666666" />
<rect x="384" y="639" width="809" height="1" fill="#666666" />
<rect x="388" y="221" width="4" height="1" fill="#999999" />
<rect x="445" y="221" width="105" height="1" fill="#999999" />
<rect x="388" y="221" width="1" height="43" fill="#999999" />
<rect x="549" y="221" width="1" height="43" fill="#999999" />
<rect x="388" y="263" width="162" height="1" fill="#999999" />
<text x="398.8" y="226" font-family="Liberation Sans" font-size="12" font-weight="bold" fill="#000" textLength="40.8" lengthAdjust="spacingAndGlyphs" >Логин</text>
<rect x="554" y="221" width="4" height="1" fill="#999999" />
<rect x="623" y="221" width="306" height="1" fill="#999999" />
<rect x="554" y="221" width="1" height="43" fill="#999999" />
<rect x="928" y="221" width="1" height="43" fill="#999999" />
<rect x="554" y="263" width="375" height="1" fill="#999999" />
<text x="564.0" y="226" font-family="Liberation Sans" font-size="12" font-weight="bold" fill="#000" textLength="53.4" lengthAdjust="spacingAndGlyphs" >Алиасы</text>
<rect x="933" y="221" width="4" height="1" fill="#999999" />
<rect x="1004" y="221" width="184" height="1" fill="#999999" />
<rect x="933" y="221" width="1" height="43" fill="#999999" />
<rect x="1187" y="221" width="1" height="43" fill="#999999" />
<rect x="933" y="263" width="255" height="1" fill="#999999" />
<text x="942.8" y="226" font-family="Liberation Sans" font-size="12" font-weight="bold" fill="#000" textLength="55.2" lengthAdjust="spacingAndGlyphs" >Период</text>
<rect x="388" y="273" width="4" height="1" fill="#999999" />
<rect x="458" y="273" width="471" height="1" fill="#999999" />
<rect x="388" y="273" width="1" height="43" fill="#999999" />
<rect x="928" y="273" width="1" height="43" fill="#999999" />
<rect x="388" y="315" width="541" height="1" fill="#999999" />
<text x="398.0" y="278" font-family="Liberation Sans" font-size="12" font-weight="bold" fill="#000" textLength="53.6" lengthAdjust="spacingAndGlyphs" >Пароль</text>
<rect x="933" y="273" width="4" height="1" fill="#999999" />
<rect x="999" y="273" width="189" height="1" fill="#999999" />
<rect x="933" y="273" width="1" height="43" fill="#999999" />
<rect x="1187" y="273" width="1" height="43" fill="#999999" />
<rect x="933" y="315" width="255" height="1" fill="#999999" />
<text x="943.8" y="278" font-family="Liberation Sans" font-size="12" font-weight="bold" fill="#000" textLength="49.4" lengthAdjust="spacingAndGlyphs" >Доступ</text>
<rect x="388" y="325" width="4" height="1" fill="#999999" />
<rect x="428" y="325" width="122" height="1" fill="#999999" />
<rect x="388" y="325" width="1" height="43" fill="#999999" />
<rect x="549" y="325" width="1" height="43" fill="#999999" />
<rect x="388" y="367" width="162" height="1" fill="#999999" />
<text x="398.4" y="330" font-family="Liberation Sans" font-size="12" font-weight="bold" fill="#000" textLength="24.0" lengthAdjust="spacingAndGlyphs" >Тип</text>
<rect x="554" y="325" width="4" height="1" fill="#999999" />
<rect x="622" y="325" width="566" height="1" fill="#999999" />
<rect x="554" y="325" width="1" height="43" fill="#999999" />
<rect x="1187" y="325" width="1" height="43" fill="#999999" />
<rect x="554" y="367" width="634" height="1" fill="#999999" />
<text x="564.4" y="330" font-family="Liberation Sans" font-size="12" font-weight="bold" fill="#000" textLength="51.0" lengthAdjust="spacingAndGlyphs" >Объект</text>
<rect x="388" y="377" width="4" height="1" fill="#999999" />
<rect x="501" y="377" width="687" height="1" fill="#999999" />
<rect x="388" y="377" width="1" height="258" fill="#999999" />
<rect x="1187" y="377" width="1" height="258" fill="#999999" />
<rect x="388" y="634" width="800" height="1" fill="#999999" />
<text x="398.0" y="382" font-family="Liberation Sans" font-size="12" font-weight="bold" fill="#000" textLength="97.6" lengthAdjust="spacingAndGlyphs" >Комментарий</text>
<rect x="396" y="231" width="146" height="25" fill="#cccccc" />
<rect x="396" y="231" width="146" height="1" fill="#999999" />
<rect x="396" y="255" width="146" height="1" fill="#999999" />
<rect x="396" y="231" width="1" height="25" fill="#999999" />
<rect x="541" y="231" width="1" height="25" fill="#999999" />
<text x="455.2" y="248" font-family="Liberation Mono" font-size="13" font-weight="normal" fill="#999999" textLength="24.8" lengthAdjust="spacingAndGlyphs" >128</text>
<rect x="562" y="231" width="359" height="25" fill="#ffffff" />
<rect x="563" y="255" width="358" height="1" fill="#ffffff" />
<rect x="920" y="232" width="1" height="24" fill="#ffffff" />
<rect x="563" y="232" width="357" height="1" fill="#ffffff" />
<rect x="563" y="232" width="1" height="23" fill="#ffffff" />
<rect x="562" y="231" width="358" height="1" fill="#666666" />
<rect x="562" y="231" width="1" height="24" fill="#666666" />
<rect x="562" y="254" width="358" height="1" fill="#666666" />
<rect x="919" y="231" width="1" height="24" fill="#666666" />
<text x="564.2" y="248" font-family="Liberation Mono" font-size="13" font-weight="normal" fill="#000" textLength="49.6" lengthAdjust="spacingAndGlyphs" >112233</text>
<text x="941.6" y="248" font-family="Liberation Sans" font-size="12" font-weight="bold" fill="#000" textLength="7.6" lengthAdjust="spacingAndGlyphs" >с</text>
<rect x="953" y="231" width="100" height="25" fill="#cccccc" />
<rect x="954" y="255" width="99" height="1" fill="#ffffff" />
<rect x="1052" y="232" width="1" height="24" fill="#ffffff" />
<rect x="954" y="232" width="98" height="1" fill="#ffffff" />
<rect x="954" y="232" width="1" height="23" fill="#ffffff" />
<rect x="953" y="231" width="99" height="1" fill="#666666" />
<rect x="953" y="231" width="1" height="24" fill="#666666" />
<rect x="953" y="254" width="99" height="1" fill="#666666" />
<rect x="1051" y="231" width="1" height="24" fill="#666666" />
<rect x="955" y="233" width="96" height="21" fill="#cccccc" />
<text x="966.8" y="248" font-family="Liberation Sans" font-size="12" font-weight="bold" fill="#000" textLength="74.2" lengthAdjust="spacingAndGlyphs" >23.01.2013</text>
<text x="1057.6" y="248" font-family="Liberation Sans" font-size="12" font-weight="bold" fill="#000" textLength="16.6" lengthAdjust="spacingAndGlyphs" >по</text>
<rect x="1080" y="231" width="100" height="25" fill="#cccccc" />
<rect x="1081" y="255" width="99" height="1" fill="#ffffff" />
<rect x="1179" y="232" width="1" height="24" fill="#ffffff" />
<rect x="1081" y="232" width="98" height="1" fill="#ffffff" />
<rect x="1081" y="232" width="1" height="23" fill="#ffffff" />
<rect x="1080" y="231" width="99" height="1" fill="#666666" />
<rect x="1080" y="231" width="1" height="24" fill="#666666" />
<rect x="1080" y="254" width="99" height="1" fill="#666666" />
<rect x="1178" y="231" width="1" height="24" fill="#666666" />
<rect x="1082" y="233" width="96" height="21" fill="#cccccc" />
<rect x="396" y="283" width="223" height="25" fill="#ffffff" />
<rect x="397" y="307" width="222" height="1" fill="#ffffff" />
<rect x="618" y="284" width="1" height="24" fill="#ffffff" />
<rect x="397" y="284" width="221" height="1" fill="#ffffff" />
<rect x="397" y="284" width="1" height="23" fill="#ffffff" />
<rect x="396" y="283" width="222" height="1" fill="#666666" />
<rect x="396" y="283" width="1" height="24" fill="#666666" />
<rect x="396" y="306" width="222" height="1" fill="#666666" />
<rect x="617" y="283" width="1" height="24" fill="#666666" />
<rect x="629" y="283" width="223" height="25" fill="#ffffff" />
<rect x="630" y="307" width="222" height="1" fill="#ffffff" />
<rect x="851" y="284" width="1" height="24" fill="#ffffff" />
<rect x="630" y="284" width="221" height="1" fill="#ffffff" />
<rect x="630" y="284" width="1" height="23" fill="#ffffff" />
<rect x="629" y="283" width="222" height="1" fill="#666666" />
<rect x="629" y="283" width="1" height="24" fill="#666666" />
<rect x="629" y="306" width="222" height="1" fill="#666666" />
<rect x="850" y="283" width="1" height="24" fill="#666666" />
<circle cx="403" cy="295.5" r="1.6" fill="#000" shape-rendering="geometricPrecision"/>
<circle cx="410" cy="295.5" r="1.6" fill="#000" shape-rendering="geometricPrecision"/>
<circle cx="417" cy="295.5" r="1.6" fill="#000" shape-rendering="geometricPrecision"/>
<circle cx="424" cy="295.5" r="1.6" fill="#000" shape-rendering="geometricPrecision"/>
<circle cx="431" cy="295.5" r="1.6" fill="#000" shape-rendering="geometricPrecision"/>
<circle cx="438" cy="295.5" r="1.6" fill="#000" shape-rendering="geometricPrecision"/>
<circle cx="445" cy="295.5" r="1.6" fill="#000" shape-rendering="geometricPrecision"/>
<circle cx="452" cy="295.5" r="1.6" fill="#000" shape-rendering="geometricPrecision"/>
<circle cx="459" cy="295.5" r="1.6" fill="#000" shape-rendering="geometricPrecision"/>
<circle cx="466" cy="295.5" r="1.6" fill="#000" shape-rendering="geometricPrecision"/>
<circle cx="473" cy="295.5" r="1.6" fill="#000" shape-rendering="geometricPrecision"/>
<circle cx="480" cy="295.5" r="1.6" fill="#000" shape-rendering="geometricPrecision"/>
<circle cx="487" cy="295.5" r="1.6" fill="#000" shape-rendering="geometricPrecision"/>
<circle cx="494" cy="295.5" r="1.6" fill="#000" shape-rendering="geometricPrecision"/>
<circle cx="501" cy="295.5" r="1.6" fill="#000" shape-rendering="geometricPrecision"/>
<circle cx="508" cy="295.5" r="1.6" fill="#000" shape-rendering="geometricPrecision"/>
<circle cx="636" cy="295.5" r="1.6" fill="#000" shape-rendering="geometricPrecision"/>
<circle cx="643" cy="295.5" r="1.6" fill="#000" shape-rendering="geometricPrecision"/>
<circle cx="650" cy="295.5" r="1.6" fill="#000" shape-rendering="geometricPrecision"/>
<circle cx="657" cy="295.5" r="1.6" fill="#000" shape-rendering="geometricPrecision"/>
<circle cx="664" cy="295.5" r="1.6" fill="#000" shape-rendering="geometricPrecision"/>
<circle cx="671" cy="295.5" r="1.6" fill="#000" shape-rendering="geometricPrecision"/>
<circle cx="678" cy="295.5" r="1.6" fill="#000" shape-rendering="geometricPrecision"/>
<circle cx="685" cy="295.5" r="1.6" fill="#000" shape-rendering="geometricPrecision"/>
<circle cx="692" cy="295.5" r="1.6" fill="#000" shape-rendering="geometricPrecision"/>
<circle cx="699" cy="295.5" r="1.6" fill="#000" shape-rendering="geometricPrecision"/>
<circle cx="706" cy="295.5" r="1.6" fill="#000" shape-rendering="geometricPrecision"/>
<circle cx="713" cy="295.5" r="1.6" fill="#000" shape-rendering="geometricPrecision"/>
<circle cx="720" cy="295.5" r="1.6" fill="#000" shape-rendering="geometricPrecision"/>
<circle cx="727" cy="295.5" r="1.6" fill="#000" shape-rendering="geometricPrecision"/>
<circle cx="734" cy="295.5" r="1.6" fill="#000" shape-rendering="geometricPrecision"/>
<circle cx="741" cy="295.5" r="1.6" fill="#000" shape-rendering="geometricPrecision"/>
<rect x="866" y="290" width="13" height="13" fill="#cccccc" />
<rect x="866" y="290" width="12" height="1" fill="#666666" />
<rect x="866" y="290" width="1" height="12" fill="#666666" />
<rect x="866" y="301" width="12" height="1" fill="#666666" />
<rect x="877" y="290" width="1" height="12" fill="#666666" />
<rect x="867" y="302" width="12" height="1" fill="#ffffff" />
<rect x="878" y="291" width="1" height="12" fill="#ffffff" />
<rect x="867" y="291" width="10" height="1" fill="#ffffff" />
<rect x="867" y="291" width="1" height="10" fill="#ffffff" />
<text x="883.4" y="300" font-family="Liberation Sans" font-size="12" font-weight="bold" fill="#000" textLength="32.0" lengthAdjust="spacingAndGlyphs" >авто</text>
<rect x="941" y="283" width="239" height="25" fill="#cccccc" />
<rect x="942" y="307" width="238" height="1" fill="#ffffff" />
<rect x="1179" y="284" width="1" height="24" fill="#ffffff" />
<rect x="942" y="284" width="237" height="1" fill="#ffffff" />
<rect x="942" y="284" width="1" height="23" fill="#ffffff" />
<rect x="941" y="283" width="238" height="1" fill="#666666" />
<rect x="941" y="283" width="1" height="24" fill="#666666" />
<rect x="941" y="306" width="238" height="1" fill="#666666" />
<rect x="1178" y="283" width="1" height="24" fill="#666666" />
<rect x="943" y="285" width="235" height="21" fill="#cccccc" />
<text x="944.8" y="299" font-family="Liberation Sans" font-size="12" font-weight="bold" fill="#000" textLength="75.0" lengthAdjust="spacingAndGlyphs" >разрешен</text>
<path d="M1162.5 293h11l-5.5 6z" fill="#000"/>
<rect x="396" y="335" width="146" height="25" fill="#cccccc" />
<rect x="397" y="359" width="145" height="1" fill="#ffffff" />
<rect x="541" y="336" width="1" height="24" fill="#ffffff" />
<rect x="397" y="336" width="144" height="1" fill="#ffffff" />
<rect x="397" y="336" width="1" height="23" fill="#ffffff" />
<rect x="396" y="335" width="145" height="1" fill="#666666" />
<rect x="396" y="335" width="1" height="24" fill="#666666" />
<rect x="396" y="358" width="145" height="1" fill="#666666" />
<rect x="540" y="335" width="1" height="24" fill="#666666" />
<rect x="398" y="337" width="142" height="21" fill="#cccccc" />
<text x="401.2" y="352" font-family="Liberation Sans" font-size="12" font-weight="bold" fill="#000" textLength="64.0" lengthAdjust="spacingAndGlyphs" >den_type</text>
<path d="M524.5 344h11l-5.5 6z" fill="#000"/>
<rect x="562" y="335" width="618" height="25" fill="#cccccc" />
<rect x="563" y="359" width="617" height="1" fill="#ffffff" />
<rect x="1179" y="336" width="1" height="24" fill="#ffffff" />
<rect x="563" y="336" width="616" height="1" fill="#ffffff" />
<rect x="563" y="336" width="1" height="23" fill="#ffffff" />
<rect x="562" y="335" width="617" height="1" fill="#666666" />
<rect x="562" y="335" width="1" height="24" fill="#666666" />
<rect x="562" y="358" width="617" height="1" fill="#666666" />
<rect x="1178" y="335" width="1" height="24" fill="#666666" />
<rect x="564" y="337" width="614" height="21" fill="#cccccc" />
<text x="568.0" y="352" font-family="Liberation Sans" font-size="12" font-weight="bold" fill="#000" textLength="24.0" lengthAdjust="spacingAndGlyphs" >-----</text>
<path d="M1162.5 344h11l-5.5 6z" fill="#000"/>
<rect x="396" y="387" width="784" height="240" fill="#ffffff" />
<rect x="397" y="626" width="783" height="1" fill="#ffffff" />
<rect x="1179" y="388" width="1" height="239" fill="#ffffff" />
<rect x="397" y="388" width="782" height="1" fill="#ffffff" />
<rect x="397" y="388" width="1" height="238" fill="#ffffff" />
<rect x="396" y="387" width="783" height="1" fill="#666666" />
<rect x="396" y="387" width="1" height="239" fill="#666666" />
<rect x="396" y="625" width="783" height="1" fill="#666666" />
<rect x="1178" y="387" width="1" height="239" fill="#666666" />
<text x="397.4" y="400" font-family="Liberation Sans" font-size="12" font-weight="normal" fill="#000" textLength="269.0" lengthAdjust="spacingAndGlyphs" >Тестирование ошибки переноса логина.</text>
<rect x="666" y="389" width="1" height="13" fill="#000" />
<rect x="389" y="650" width="130" height="25" fill="#cccccc" />
<rect x="389" y="650" width="129" height="1" fill="#666666" />
<rect x="389" y="650" width="1" height="24" fill="#666666" />
<rect x="389" y="673" width="129" height="1" fill="#666666" />
<rect x="517" y="650" width="1" height="24" fill="#666666" />
<rect x="390" y="674" width="129" height="1" fill="#ffffff" />
<rect x="518" y="651" width="1" height="24" fill="#ffffff" />
<rect x="390" y="651" width="127" height="1" fill="#ffffff" />
<rect x="390" y="651" width="1" height="22" fill="#ffffff" />
<text x="406.0" y="667" font-family="Liberation Sans" font-size="12" font-weight="bold" fill="#000" textLength="95.4" lengthAdjust="spacingAndGlyphs" >Восстановить</text>
<rect x="1039" y="650" width="53" height="25" fill="#cccccc" />
<rect x="1039" y="650" width="52" height="1" fill="#666666" />
<rect x="1039" y="650" width="1" height="24" fill="#666666" />
<rect x="1039" y="673" width="52" height="1" fill="#666666" />
<rect x="1090" y="650" width="1" height="24" fill="#666666" />
<rect x="1040" y="674" width="52" height="1" fill="#ffffff" />
<rect x="1091" y="651" width="1" height="24" fill="#ffffff" />
<rect x="1040" y="651" width="50" height="1" fill="#ffffff" />
<rect x="1040" y="651" width="1" height="22" fill="#ffffff" />
<text x="1056.0" y="667" font-family="Liberation Sans" font-size="12" font-weight="bold" fill="#000" textLength="19.4" lengthAdjust="spacingAndGlyphs" >Ок</text>
<rect x="1096" y="650" width="88" height="25" fill="#cccccc" />
<rect x="1096" y="650" width="87" height="1" fill="#666666" />
<rect x="1096" y="650" width="1" height="24" fill="#666666" />
<rect x="1096" y="673" width="87" height="1" fill="#666666" />
<rect x="1182" y="650" width="1" height="24" fill="#666666" />
<rect x="1097" y="674" width="87" height="1" fill="#ffffff" />
<rect x="1183" y="651" width="1" height="24" fill="#ffffff" />
<rect x="1097" y="651" width="85" height="1" fill="#ffffff" />
<rect x="1097" y="651" width="1" height="22" fill="#ffffff" />
<text x="1113.0" y="667" font-family="Liberation Sans" font-size="12" font-weight="bold" fill="#000" textLength="52.4" lengthAdjust="spacingAndGlyphs" >Отмена</text>
<rect x="5" y="689" width="170" height="17" fill="#999999" />
<rect x="5" y="689" width="1" height="16" fill="#ffffff" />
<rect x="6" y="705" width="1" height="1" fill="#ffffff" />
<rect x="7" y="706" width="168" height="1" fill="#666666" />
<rect x="175" y="689" width="1" height="16" fill="#666666" />
<rect x="174" y="705" width="1" height="1" fill="#666666" />
<rect x="10" y="689" width="16" height="16" fill="#9d9d99" />
<rect x="10" y="689" width="15" height="1" fill="#ffffff" />
<rect x="10" y="689" width="1" height="16" fill="#ffffff" />
<rect x="11" y="704" width="15" height="1" fill="#8e8e88" />
<rect x="25" y="690" width="1" height="15" fill="#8e8e88" />
<path d="M15 694 L21 700 M21 694 L15 700" stroke="#1a1a1a" stroke-width="2.1" stroke-linecap="round" shape-rendering="geometricPrecision"/>
<text x="30.4" y="702" font-family="Liberation Sans" font-size="12" font-weight="bold" fill="#000" textLength="134.4" lengthAdjust="spacingAndGlyphs" >Редактор адресов</text>
<rect x="176" y="689" width="103" height="17" fill="#999999" />
<rect x="176" y="689" width="1" height="16" fill="#ffffff" />
<rect x="177" y="705" width="1" height="1" fill="#ffffff" />
<rect x="178" y="706" width="101" height="1" fill="#666666" />
<rect x="279" y="689" width="1" height="16" fill="#666666" />
<rect x="278" y="705" width="1" height="1" fill="#666666" />
<rect x="181" y="689" width="16" height="16" fill="#9d9d99" />
<rect x="181" y="689" width="15" height="1" fill="#ffffff" />
<rect x="181" y="689" width="1" height="16" fill="#ffffff" />
<rect x="182" y="704" width="15" height="1" fill="#8e8e88" />
<rect x="196" y="690" width="1" height="15" fill="#8e8e88" />
<path d="M186 694 L192 700 M192 694 L186 700" stroke="#1a1a1a" stroke-width="2.1" stroke-linecap="round" shape-rendering="geometricPrecision"/>
<text x="200.2" y="702" font-family="Liberation Sans" font-size="12" font-weight="bold" fill="#000" textLength="67.4" lengthAdjust="spacingAndGlyphs" >Рассылки</text>
<rect x="280" y="689" width="156" height="17" fill="#999999" />
<rect x="280" y="689" width="1" height="16" fill="#ffffff" />
<rect x="281" y="705" width="1" height="1" fill="#ffffff" />
<rect x="282" y="706" width="154" height="1" fill="#666666" />
<rect x="436" y="689" width="1" height="16" fill="#666666" />
<rect x="435" y="705" width="1" height="1" fill="#666666" />
<rect x="285" y="689" width="16" height="16" fill="#9d9d99" />
<rect x="285" y="689" width="15" height="1" fill="#ffffff" />
<rect x="285" y="689" width="1" height="16" fill="#ffffff" />
<rect x="286" y="704" width="15" height="1" fill="#8e8e88" />
<rect x="300" y="690" width="1" height="15" fill="#8e8e88" />
<path d="M290 694 L296 700 M296 694 L290 700" stroke="#1a1a1a" stroke-width="2.1" stroke-linecap="round" shape-rendering="geometricPrecision"/>
<text x="305.6" y="702" font-family="Liberation Sans" font-size="12" font-weight="bold" fill="#000" textLength="122.8" lengthAdjust="spacingAndGlyphs" >Поиск договоров</text>
<rect x="437" y="688" width="109" height="20" fill="#cccccc" />
<rect x="437" y="688" width="1" height="19" fill="#ffffff" />
<rect x="438" y="707" width="1" height="1" fill="#ffffff" />
<rect x="439" y="708" width="107" height="1" fill="#666666" />
<rect x="546" y="689" width="1" height="18" fill="#666666" />
<rect x="545" y="707" width="1" height="1" fill="#666666" />
<rect x="442" y="691" width="16" height="16" fill="#cbcbc6" />
<rect x="442" y="691" width="15" height="1" fill="#ffffff" />
<rect x="442" y="691" width="1" height="16" fill="#ffffff" />
<rect x="443" y="706" width="15" height="1" fill="#8e8e88" />
<rect x="457" y="692" width="1" height="15" fill="#8e8e88" />
<path d="M447 696 L453 702 M453 696 L447 702" stroke="#1a1a1a" stroke-width="2.1" stroke-linecap="round" shape-rendering="geometricPrecision"/>
<text x="463.0" y="704" font-family="Liberation Sans" font-size="13" font-weight="normal" fill="#000" textLength="69.6" lengthAdjust="spacingAndGlyphs" >artur_test</text>
<rect x="547" y="689" width="197" height="17" fill="#999999" />
<rect x="547" y="689" width="1" height="16" fill="#ffffff" />
<rect x="548" y="705" width="1" height="1" fill="#ffffff" />
<rect x="549" y="706" width="195" height="1" fill="#666666" />
<rect x="744" y="689" width="1" height="16" fill="#666666" />
<rect x="743" y="705" width="1" height="1" fill="#666666" />
<rect x="552" y="689" width="16" height="16" fill="#9d9d99" />
<rect x="552" y="689" width="15" height="1" fill="#ffffff" />
<rect x="552" y="689" width="1" height="16" fill="#ffffff" />
<rect x="553" y="704" width="15" height="1" fill="#8e8e88" />
<rect x="567" y="690" width="1" height="15" fill="#8e8e88" />
<path d="M557 694 L563 700 M563 694 L557 700" stroke="#1a1a1a" stroke-width="2.1" stroke-linecap="round" shape-rendering="geometricPrecision"/>
<text x="571.4" y="702" font-family="Liberation Sans" font-size="12" font-weight="bold" fill="#000" textLength="162.6" lengthAdjust="spacingAndGlyphs" >Справочники объектов</text>
<rect x="745" y="689" width="140" height="17" fill="#999999" />
<rect x="745" y="689" width="1" height="16" fill="#ffffff" />
<rect x="746" y="705" width="1" height="1" fill="#ffffff" />
<rect x="747" y="706" width="138" height="1" fill="#666666" />
<rect x="885" y="689" width="1" height="16" fill="#666666" />
<rect x="884" y="705" width="1" height="1" fill="#666666" />
<rect x="750" y="689" width="16" height="16" fill="#9d9d99" />
<rect x="750" y="689" width="15" height="1" fill="#ffffff" />
<rect x="750" y="689" width="1" height="16" fill="#ffffff" />
<rect x="751" y="704" width="15" height="1" fill="#8e8e88" />
<rect x="765" y="690" width="1" height="15" fill="#8e8e88" />
<path d="M755 694 L761 700 M761 694 L755 700" stroke="#1a1a1a" stroke-width="2.1" stroke-linecap="round" shape-rendering="geometricPrecision"/>
<text x="770.6" y="702" font-family="Liberation Sans" font-size="12" font-weight="bold" fill="#000" textLength="104.0" lengthAdjust="spacingAndGlyphs" >Модуль Phone</text>
</svg></body></html>
